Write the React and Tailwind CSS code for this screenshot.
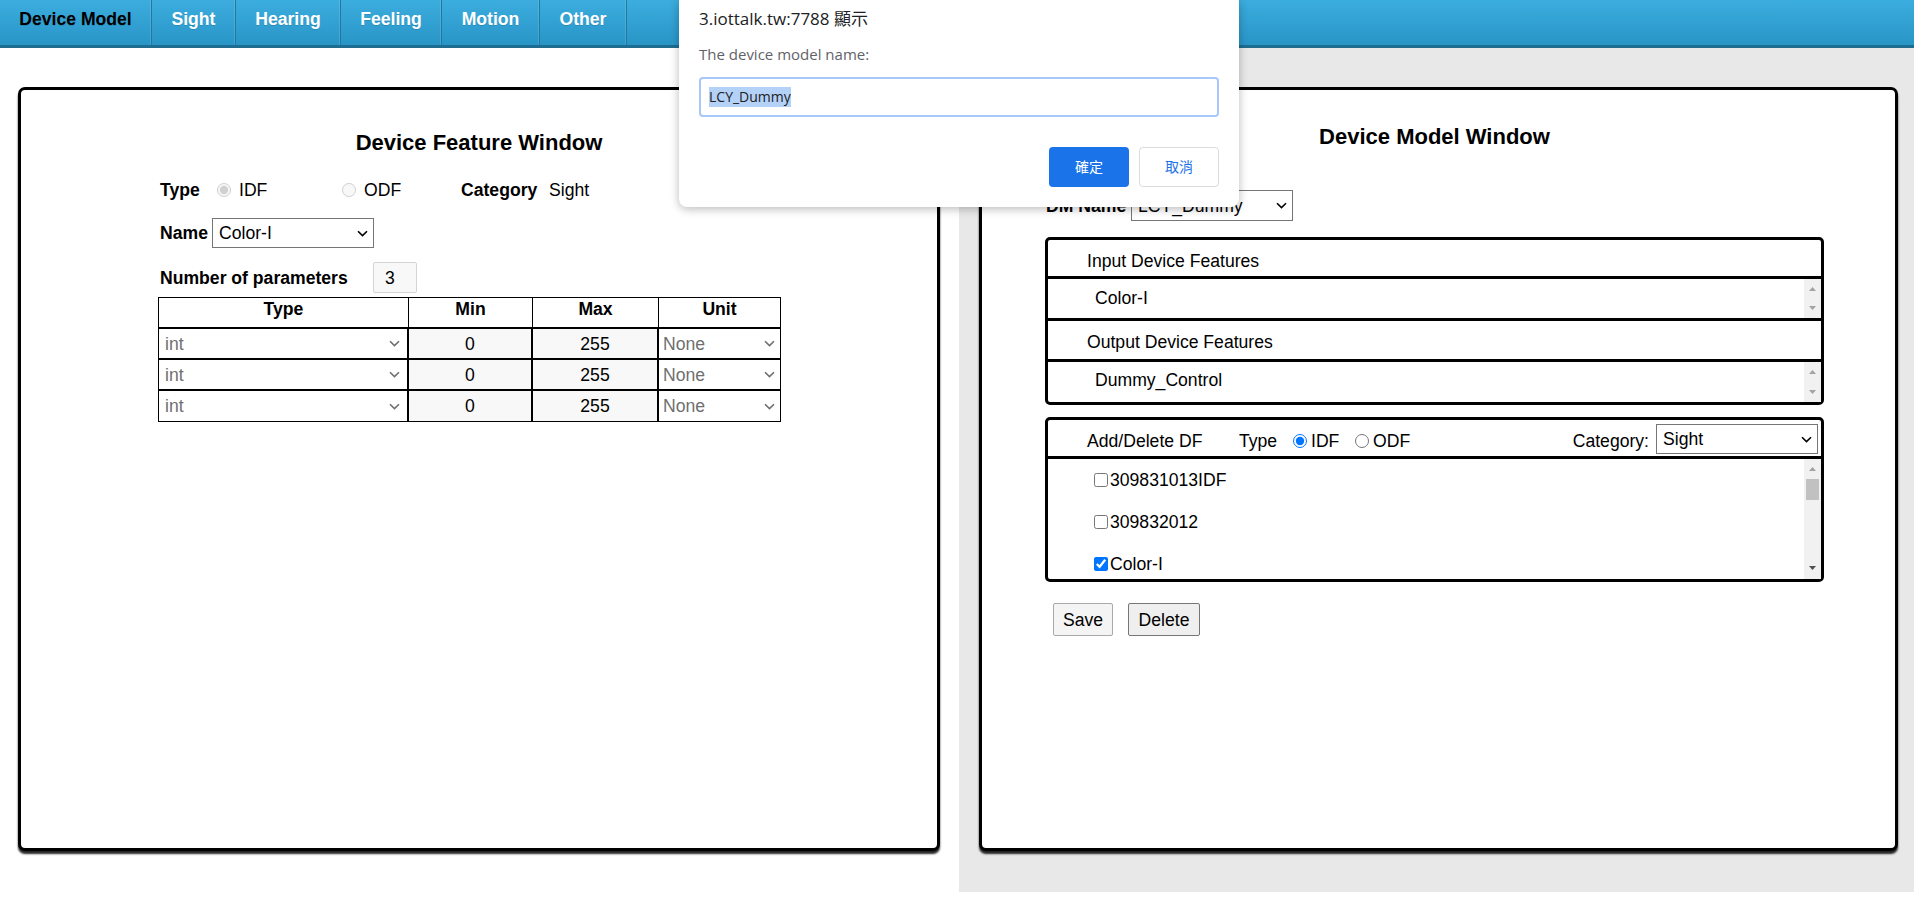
import React from 'react';

const Chevron = ({ className = '' }) => (
  <svg width="11" height="7" viewBox="0 0 11 7" className={className}>
    <path d="M1 1.2 5.5 5.6 10 1.2" fill="none" stroke="currentColor" strokeWidth="1.6" />
  </svg>
);

const ArrowUp = ({ className = '', color = '#a3a3a3' }) => (
  <svg width="7" height="4" viewBox="0 0 7 4" className={className}>
    <path d="M3.5 0 7 4H0z" fill={color} />
  </svg>
);

const ArrowDown = ({ className = '', color = '#a3a3a3' }) => (
  <svg width="7" height="4" viewBox="0 0 7 4" className={className}>
    <path d="M0 0h7L3.5 4z" fill={color} />
  </svg>
);

const tabs = [
  { label: 'Device Model', cls: 'w-[152px] text-black' },
  { label: 'Sight', cls: 'w-[84px] text-white' },
  { label: 'Hearing', cls: 'w-[105px] text-white' },
  { label: 'Feeling', cls: 'w-[101px] text-white' },
  { label: 'Motion', cls: 'w-[98px] text-white' },
  { label: 'Other', cls: 'w-[87px] text-white' },
];

function MiniScroll() {
  return (
    <div className="w-[17px] h-full bg-[#f1f1f1] flex flex-col items-center justify-between py-[8px] shrink-0">
      <ArrowUp />
      <ArrowDown />
    </div>
  );
}

function ParamRow({ last }) {
  return (
    <div className={last ? 'flex h-[30px]' : 'flex h-[31px] border-b-2 border-black'}>
      <div className="w-[250px] border-r-2 border-black flex items-center justify-between pl-[6px] pr-[7px] text-[#6f6f6f]">
        <span>int</span>
        <Chevron className="text-[#6f6f6f]" />
      </div>
      <div className="w-[124px] border-r-2 border-black bg-[#f8f8f8] flex items-center justify-center">0</div>
      <div className="w-[126px] border-r-2 border-black bg-[#f8f8f8] flex items-center justify-center">255</div>
      <div className="flex-1 flex items-center justify-between pl-[4px] pr-[5px] text-[#6f6f6f]">
        <span>None</span>
        <Chevron className="text-[#6f6f6f]" />
      </div>
    </div>
  );
}

export default function App() {
  return (
    <div className="relative w-[1914px] h-[899px] bg-white overflow-hidden font-['Liberation_Sans',Arial,sans-serif] text-[17.6px] leading-[20px] text-black">
      {/* Top nav */}
      <nav className="h-[48px] flex bg-linear-to-b from-[#3badde] to-[#2995c7] border-b-[3px] border-[#1f6c91]">
        {tabs.map((t) => (
          <div
            key={t.label}
            className={`${t.cls} h-full border-r border-[#22789f] shadow-[inset_-1px_0_0_rgba(255,255,255,0.12)] font-bold text-center pt-[9px] [text-shadow:0_1px_0_rgba(0,0,0,0.15)]`}
          >
            {t.label}
          </div>
        ))}
      </nav>

      <div className="flex h-[844px]">
        {/* Left column */}
        <div className="w-[959px] shrink-0 bg-white pt-[39px] pl-[18px]">
          <div className="w-[922px] h-[764px] border-[3px] border-black rounded-[7px] bg-white shadow-[0_3px_2px_rgba(0,0,0,0.85)]">
            <div className="mt-[40px] text-center font-bold text-[22px] leading-[25px]">Device Feature Window</div>
            <div className="ml-[137px]">
              <div className="flex items-center h-[20px] mt-[25px]">
                <span className="w-[59px] pl-[2px] font-bold">Type</span>
                <input type="radio" disabled defaultChecked className="m-0 w-[14px] h-[14px]" />
                <span className="ml-[8px] w-[103px]">IDF</span>
                <input type="radio" disabled className="m-0 w-[14px] h-[14px]" />
                <span className="ml-[8px] w-[97px]">ODF</span>
                <span className="w-[88px] font-bold">Category</span>
                <span>Sight</span>
              </div>
              <div className="flex items-center mt-[18px]">
                <span className="w-[54px] pl-[2px] font-bold">Name</span>
                <div className="w-[162px] h-[30px] border border-[#767676] bg-white flex items-center justify-between pl-[6px] pr-[5px]">
                  <span>Color-I</span>
                  <Chevron />
                </div>
              </div>
              <div className="flex items-center mt-[14px]">
                <span className="w-[215px] pl-[2px] font-bold">Number of parameters</span>
                <div className="w-[44px] h-[31px] border border-[#d4d4d4] rounded-[2px] bg-[#f8f8f8] flex items-center pl-[11px]">3</div>
              </div>
              <div className="mt-[4px] w-[623px] border border-black">
                <div className="flex h-[31px] border-b-2 border-black font-bold">
                  <div className="w-[250px] border-r border-black text-center pt-[1px]">Type</div>
                  <div className="w-[124px] border-r border-black text-center pt-[1px]">Min</div>
                  <div className="w-[126px] border-r border-black text-center pt-[1px]">Max</div>
                  <div className="flex-1 text-center pt-[1px]">Unit</div>
                </div>
                <ParamRow />
                <ParamRow />
                <ParamRow last />
              </div>
            </div>
          </div>
        </div>

        {/* Right column */}
        <div className="flex-1 bg-[#e8e8e8] pt-[39px] pl-[20px]">
          <div className="w-[919px] h-[764px] border-[3px] border-black rounded-[7px] bg-white shadow-[0_3px_2px_rgba(0,0,0,0.85)]">
            <div className="mt-[34px] pr-[8px] text-center font-bold text-[22px] leading-[25px]">Device Model Window</div>
            <div className="flex items-center mt-[41px] ml-[64px]">
              <span className="w-[85px] font-bold">DM Name</span>
              <div className="w-[162px] h-[31px] border border-[#767676] bg-white flex items-center justify-between pl-[6px] pr-[5px]">
                <span>LCY_Dummy</span>
                <Chevron />
              </div>
            </div>

            {/* Features box */}
            <div className="mt-[16px] ml-[63px] w-[779px] border-[3px] border-black rounded-[5px]">
              <div className="h-[39px] border-b-[3px] border-black pl-[39px] pt-[11px]">Input Device Features</div>
              <div className="h-[42px] border-b-[3px] border-black flex">
                <div className="flex-1 pl-[47px] pt-[9px]">Color-I</div>
                <MiniScroll />
              </div>
              <div className="h-[41px] border-b-[3px] border-black pl-[39px] pt-[11px]">Output Device Features</div>
              <div className="h-[40px] flex">
                <div className="flex-1 pl-[47px] pt-[8px]">Dummy_Control</div>
                <MiniScroll />
              </div>
            </div>

            {/* Add/Delete DF box */}
            <div className="mt-[12px] ml-[63px] w-[779px] h-[165px] border-[3px] border-black rounded-[5px] flex flex-col">
              <div className="h-[39px] border-b-[3px] border-black flex items-start pt-[4px] pl-[39px] pr-[3px] shrink-0">
                <span className="mt-[7px] w-[152px]">Add/Delete DF</span>
                <span className="mt-[7px] w-[54px]">Type</span>
                <input type="radio" name="dftype" defaultChecked className="m-0 mt-[10px] w-[14px] h-[14px]" />
                <span className="mt-[7px] ml-[4px] w-[44px]">IDF</span>
                <input type="radio" name="dftype" className="m-0 mt-[10px] w-[14px] h-[14px]" />
                <span className="mt-[7px] ml-[4px]">ODF</span>
                <div className="flex-1" />
                <span className="mt-[7px]">Category:</span>
                <div className="ml-[7px] w-[162px] h-[30px] border border-[#767676] bg-white flex items-center justify-between pl-[6px] pr-[5px]">
                  <span>Sight</span>
                  <Chevron />
                </div>
              </div>
              <div className="flex-1 flex overflow-hidden">
                <div className="flex-1 pl-[46px] pt-[11px] flex flex-col gap-[22px]">
                  {[
                    { label: '309831013IDF', checked: false },
                    { label: '309832012', checked: false },
                    { label: 'Color-I', checked: true },
                  ].map((it) => (
                    <label key={it.label} className="h-[20px] flex items-center">
                      <input type="checkbox" defaultChecked={it.checked} className="m-0 w-[14px] h-[14px]" />
                      <span className="ml-[2px]">{it.label}</span>
                    </label>
                  ))}
                </div>
                <div className="w-[17px] h-full bg-[#f1f1f1] flex flex-col items-center shrink-0">
                  <ArrowUp className="mt-[8px]" />
                  <div className="mt-[8px] w-[13px] h-[21px] bg-[#c1c1c1]" />
                  <div className="flex-1" />
                  <ArrowDown className="mb-[9px]" color="#505050" />
                </div>
              </div>
            </div>

            <div className="mt-[21px] ml-[71px] flex gap-[15px]">
              <button className="w-[60px] h-[33px] border border-[#a9a9a9] rounded-[2px] bg-[#f4f4f4]">Save</button>
              <button className="w-[72px] h-[33px] border border-[#767676] rounded-[2px] bg-[#efefef]">Delete</button>
            </div>
          </div>
        </div>
      </div>

      {/* Prompt dialog */}
      <div className="absolute left-[679px] top-0 w-[560px] h-[207px] bg-white rounded-b-[8px] shadow-[0_2px_10px_rgba(0,0,0,0.28)] px-[20px] font-['Open_Sans','Noto_Sans_CJK_TC',sans-serif]">
        <div className="mt-[7px] h-[24px] text-[17px] leading-[24px] text-[#202124]">3.iottalk.tw:7788 顯示</div>
        <div className="mt-[13px] h-[20px] text-[15px] leading-[20px] text-[#5f6368]">The device model name:</div>
        <div className="mt-[13px] h-[40px] border-2 border-[#a8c7fa] rounded-[4px] flex items-center pl-[8px]">
          <span className="bg-[#b4d1f7] text-[14px] leading-[20px] text-[#202124]">LCY_Dummy</span>
        </div>
        <div className="mt-[30px] flex justify-end gap-[10px]">
          <div className="w-[80px] h-[40px] rounded-[4px] bg-[#1a73e8] text-white text-[14px] flex items-center justify-center">確定</div>
          <div className="w-[80px] h-[40px] rounded-[4px] border border-[#dadce0] bg-white text-[#1a73e8] text-[14px] flex items-center justify-center">取消</div>
        </div>
      </div>
    </div>
  );
}
